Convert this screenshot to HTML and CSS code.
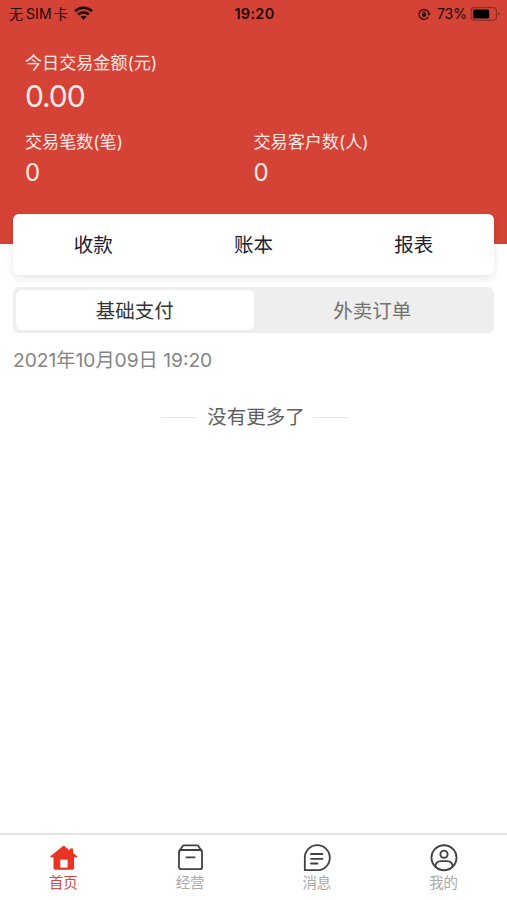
FILE: index.html
```html
<!DOCTYPE html>
<html lang="zh-CN">
<head>
<meta charset="utf-8">
<meta name="viewport" content="width=device-width, initial-scale=1">
<title>首页</title>
<link rel="stylesheet" href="styles.css">
</head>
<body>
<div class="app">
  <header class="hero">
    <div class="status">
      <div class="carrier"><span>无</span><span class="sim">SIM</span><span>卡</span>
        <svg class="wifi" width="19" height="14" viewBox="0 0 19 14" fill="none" stroke="#1c0806" stroke-width="2.7"><path d="M1 5.2c4.8-4.6 12.200-4.600 17 0M4.100 8.600c3.100-2.900 7.700-2.900 10.800 0"/><path d="M9.500 13.700 6.500 10.800c1.700-1.500 4.300-1.500 6 0z" fill="#1c0806" stroke="none"/></svg>
      </div>
      <time class="clock">19:20</time>
      <div class="power">
        <svg class="lock" width="13" height="12" viewBox="0 0 13 12" fill="none" stroke="#1c0806" stroke-width="1.200"><path d="M10.300 9A5 5 0 1 1 11 5.500"/><path d="M9.200 5.400h3.600L11 7.800z" fill="#1c0806" stroke="none"/><path d="M4 5.300h4v3.300H4z" fill="#1c0806" stroke="none"/><path d="M4.800 5.500V4.400a1.200 1.200 0 0 1 2.400 0v1.100" stroke-width=".9"/></svg>
        <span>73%</span>
        <svg class="battery" width="30" height="14" viewBox="0 0 30 14"><rect x="1" y=".7" width="25.500" height="12.600" rx="3.500" fill="none" stroke="#8e2d25" stroke-width="1.200"/><rect x="3" y="2.600" width="16.200" height="8.800" rx="1.500" fill="#000"/><path d="M28 5v4q1.500-.5 1.500-2T28 5z" fill="#8e2d25"/></svg>
      </div>
    </div>
    <section class="summary">
      <div class="label">今日交易金额(元)</div>
      <div class="amount">0.00</div>
      <div class="stats">
        <div><div class="label">交易笔数(笔)</div><div class="count">0</div></div>
        <div><div class="label">交易客户数(人)</div><div class="count">0</div></div>
      </div>
    </section>
  </header>
  <main>
    <nav class="actions"><a>收款</a><a>账本</a><a>报表</a></nav>
    <div class="tabs"><div class="tab active">基础支付</div><div class="tab">外卖订单</div></div>
    <div class="date">2021年10月09日 19:20</div>
    <div class="end">没有更多了</div>
  </main>
  <nav class="tabbar">
    <a class="item current">
      <svg width="30" height="28" viewBox="0 0 30 28"><path d="M15.700 1.500 2.400 12.300q-.4.900.6.900h2.500v10.900q0 1.600 1.600 1.600h17.400q1.600 0 1.600-1.600V13.200h2.500q1 0 .6-.9L25 9V4.500h-3.200v2z" fill="#e93323"/><path d="M12.300 15.700h7.300v7.900h-7.300z" fill="#fff"/></svg>
      <span>首页</span>
    </a>
    <a class="item">
      <svg width="30" height="28" viewBox="0 0 30 28" fill="none" stroke="#414141" stroke-width="1.800" stroke-linejoin="round" stroke-linecap="round"><rect x="4" y="6" width="23" height="19.200" rx="2"/><path d="m4.500 6.800 3.200-4.700q.5-.7 1.300-.7h13q.8 0 1.300.7l3.200 4.700M11.400 13.300h8.200"/></svg>
      <span>经营</span>
    </a>
    <a class="item">
      <svg width="30" height="28" viewBox="0 0 30 28" fill="none" stroke="#414141" stroke-width="1.800" stroke-linejoin="round" stroke-linecap="round"><path d="M15.300 1.200a12.500 12.500 0 1 1 0 25H2.800V13.700A12.500 12.500 0 0 1 15.300 1.200z"/><path d="M9 10h11.500M9 14.800h11.500M9 19.500h6.500"/></svg>
      <span>消息</span>
    </a>
    <a class="item">
      <svg width="30" height="28" viewBox="0 0 30 28" fill="none" stroke="#414141" stroke-width="1.900"><circle cx="15" cy="13.700" r="12.500"/><circle cx="15" cy="10.200" r="3.600"/><path d="M6.200 22.500c.5-3.500 2.800-5.400 5.800-5.400h6c3 0 5.300 1.900 5.800 5.400"/></svg>
      <span>我的</span>
    </a>
  </nav>
</div>
</body>
</html>
```
FILE: styles.css
```css
* { box-sizing: border-box; }

body {
  margin: 0;
  background: #fff;
  font-family: Inter, "Noto Sans CJK SC", sans-serif;
}

.app {
  display: flex;
  flex-direction: column;
  height: 900px;
}

.hero {
  height: 244px;
  background: #d54336;
  color: #ffeae6;
}

.status {
  display: grid;
  grid-template-columns: 1fr auto 1fr;
  align-items: center;
  height: 28px;
  padding: 0 7px 0 9px;
  color: #1c0806;
  font-size: 14px;
  line-height: 20px;
}

.carrier, .power { display: flex; align-items: center; }
.sim { margin: 0 2px 0 3px; letter-spacing: 0.1px; }
.wifi { margin-left: 6px; margin-top: -2px; }
.clock { font-weight: 600; font-size: 14.5px; letter-spacing: 0.3px; }
.power { justify-content: flex-end; }
.lock { margin-right: 6px; }
.battery { margin-left: 3px; }

.summary { padding: 23px 25px 0; }

.label {
  height: 24px;
  font-size: 17.1px;
  line-height: 24px;
  white-space: nowrap;
}

.amount {
  height: 40px;
  font-size: 30px;
  line-height: 42px;
  letter-spacing: -1.1px;
}

.stats {
  display: grid;
  grid-template-columns: 1fr 1fr;
  margin-top: 15px;
}

.count {
  margin-top: 3px;
  font-size: 24px;
  line-height: 32px;
}

main { flex: 1; padding: 0 13px; }

.actions {
  position: relative;
  display: grid;
  grid-template-columns: repeat(3, 1fr);
  height: 61px;
  margin-top: -30px;
  border-radius: 6px;
  background: #fff;
  box-shadow: 0 3px 9px rgba(0, 0, 0, 0.1);
  color: #20202e;
  font-size: 19.5px;
  line-height: 63px;
  text-align: center;
}

.tabs {
  display: flex;
  height: 46px;
  margin-top: 12px;
  padding: 3px;
  border-radius: 6px;
  background: #eee;
  font-size: 19.5px;
  line-height: 42px;
  text-align: center;
}

.tab { flex: 1; border-radius: 6px; color: #707070; }
.tab.active { height: 40px; background: #fff; color: #333; }

.date {
  margin-top: 12px;
  color: #858585;
  font-size: 19.2px;
  line-height: 30px;
  white-space: nowrap;
}

.end {
  display: flex;
  align-items: center;
  justify-content: center;
  gap: 8px;
  margin-top: 26px;
  padding-left: 1px;
  color: #606060;
  font-size: 19.5px;
  line-height: 32px;
}

.end::before, .end::after {
  content: "";
  width: 34px;
  height: 1px;
  background: #e5e5e5;
}

.end::before { margin-right: 4px; }

.tabbar {
  display: grid;
  grid-template-columns: repeat(4, 1fr);
  height: 67px;
  border-top: 2px solid #e2e2e2;
}

.item {
  display: flex;
  flex-direction: column;
  align-items: center;
  padding-top: 9px;
  color: #aaa;
  font-size: 14.5px;
  line-height: 20px;
}

.item svg { display: block; }
.item span { margin-top: 1px; }
.item.current { color: #d54a40; }
```
